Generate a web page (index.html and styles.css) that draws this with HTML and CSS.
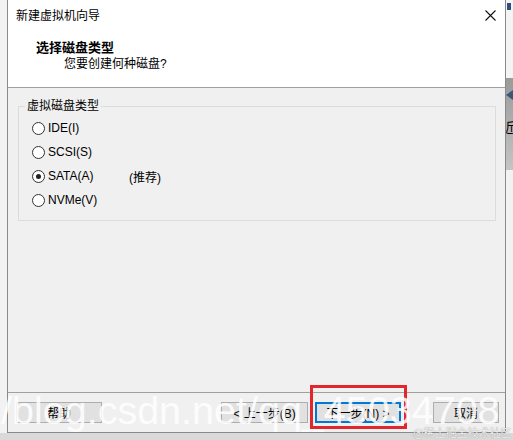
FILE: index.html
```html
<!DOCTYPE html>
<html lang="zh-CN">
<head>
<meta charset="utf-8">
<title>新建虚拟机向导</title>
<link rel="stylesheet" href="styles.css">
</head>
<body>
<div class="screen">
  <div class="side side-left"></div>
  <div class="dialog">
    <div class="titlebar">
      <span class="title">新建虚拟机向导</span>
      <span class="close" aria-label="关闭">
        <svg width="11" height="11" viewBox="0 0 11 11"><path d="M0.5 0.5 L10.5 10.5 M10.5 0.5 L0.5 10.5" stroke="#111" stroke-width="1.1" fill="none"/></svg>
      </span>
    </div>
    <div class="header">
      <div class="h-title">选择磁盘类型</div>
      <div class="h-sub">您要创建何种磁盘?</div>
    </div>
    <div class="body">
      <fieldset class="group">
        <legend>虚拟磁盘类型</legend>
        <div class="options">
          <div class="opt"><span class="radio"></span><span class="lbl">IDE(I)</span></div>
          <div class="opt"><span class="radio"></span><span class="lbl">SCSI(S)</span></div>
          <div class="opt"><span class="radio checked"><span class="dot"></span></span><span class="lbl">SATA(A)</span><span class="note">(推荐)</span></div>
          <div class="opt"><span class="radio"></span><span class="lbl">NVMe(V)</span></div>
        </div>
      </fieldset>
    </div>
    <div class="footer">
      <button class="btn btn-help">帮助</button>
      <span class="spacer"></span>
      <button class="btn btn-back">&lt; 上一步(B)</button>
      <button class="btn btn-next">下一步(N) &gt;</button>
      <button class="btn btn-cancel">取消</button>
    </div>
  </div>
  <div class="side side-right">
    <div class="r-top"><span class="r-icon"></span></div>
    <div class="r-band"><span class="r-arrow"></span><span class="r-char">近</span></div>
    <div class="r-rest"></div>
  </div>
</div>
<div class="annot"></div>
<div class="wm">/blog.csdn.net/qq_45034708</div>
<div class="wm2">@稀土掘金技术社区</div>
</body>
</html>
```

FILE: styles.css
```css
* { box-sizing: border-box; }
html, body {
  margin: 0;
  padding: 0;
}
body {
  width: 513px;
  height: 440px;
  overflow: hidden;
  position: relative;
  background: #d9d9d9;
  font-family: "Liberation Sans", "Noto Sans CJK SC", sans-serif;
  font-size: 12px;
  color: #000;
}
.screen {
  display: flex;
  height: 433px;
}
.side-left {
  width: 7px;
  background: #f2f2f2;
}
.dialog {
  width: 499px;
  height: 433px;
  border: 1px solid #8a8a8a;
  border-top: none;
  background: #f0f0f0;
  display: flex;
  flex-direction: column;
}
.titlebar {
  height: 30px;
  background: #fff;
  display: flex;
  align-items: center;
  padding-left: 8px;
  padding-right: 9px;
}
.title {
  flex: 1;
  font-size: 12px;
  line-height: 16px;
  padding-top: 1px;
}
.close {
  display: flex;
  width: 11px;
  height: 11px;
}
.header {
  height: 58px;
  background: #fff;
  border-bottom: 1px solid #a0a0a0;
  padding: 9px 0 0 28px;
}
.h-title {
  font-size: 13px;
  font-weight: bold;
  line-height: 17px;
}
.h-sub {
  font-size: 12px;
  line-height: 17px;
  padding-left: 28px;
}
.body {
  flex: 1;
  padding: 10px 9px 0 10px;
}
.group {
  margin: 0;
  padding: 2px 6px 8px 6px;
  border: 1px solid #dcdcdc;
  min-width: 0;
}
.group legend {
  padding: 0 2px;
  font-size: 12px;
  line-height: 16px;
}
.options {
  margin-left: 7px;
}
.opt {
  height: 24px;
  display: flex;
  align-items: center;
}
.radio {
  width: 13px;
  height: 13px;
  border: 1px solid #333;
  border-radius: 50%;
  background: #fff;
  display: flex;
  align-items: center;
  justify-content: center;
  margin-right: 3px;
}
.dot {
  width: 5px;
  height: 5px;
  border-radius: 50%;
  background: #222;
}
.lbl {
  width: 81px;
  font-size: 12px;
}
.note {
  font-size: 12px;
}
.footer {
  height: 40px;
  border-top: 1px solid #a0a0a0;
  display: flex;
  align-items: flex-start;
  padding: 9px 6px 0 8px;
}
.spacer { flex: 1; }
.btn {
  height: 21px;
  background: #e1e1e1;
  border: 1px solid #adadad;
  font-family: "Liberation Sans", "Noto Sans CJK SC", sans-serif;
  font-size: 12px;
  color: #000;
  padding: 0;
  margin: 0;
}
.btn-help { width: 86px; }
.btn-back { width: 87px; }
.btn-next {
  width: 86px;
  margin-left: 7px;
  border: 2px solid #0078d7;
}
.btn-cancel {
  width: 66px;
  margin-left: 32px;
}
.side-right {
  width: 7px;
  display: flex;
  flex-direction: column;
  overflow: hidden;
}
.r-top {
  height: 78px;
  background: #f4f4f4;
  position: relative;
}
.r-icon {
  position: absolute;
  left: 1px;
  top: 3px;
  width: 4px;
  height: 7px;
  background: #2d4f7a;
}
.r-band {
  height: 92px;
  background: linear-gradient(#9a9a9a, #c4c4c4);
  position: relative;
  overflow: hidden;
}
.r-arrow {
  position: absolute;
  left: 0;
  top: 12px;
  width: 7px;
  height: 10px;
  background: #3b5778;
  clip-path: polygon(100% 0, 0 50%, 100% 100%);
}
.r-char {
  position: absolute;
  left: -4px;
  top: 42px;
  font-size: 13px;
  line-height: 14px;
  font-family: "Noto Sans CJK SC", sans-serif;
}
.r-rest {
  flex: 1;
  background: #f2f2f2;
}
.annot {
  position: absolute;
  left: 310px;
  top: 385px;
  width: 97px;
  height: 44px;
  border: 3px solid #e0282c;
}
.wm {
  position: absolute;
  left: 1px;
  top: 390px;
  font-family: "Liberation Sans", sans-serif;
  font-size: 39.5px;
  line-height: 40px;
  color: rgba(255, 255, 255, 0.85);
  white-space: nowrap;
}
.wm2 {
  position: absolute;
  left: 413px;
  top: 426px;
  font-family: "Noto Sans CJK SC", sans-serif;
  font-size: 11px;
  line-height: 13px;
  color: rgba(255, 255, 255, 0.9);
  text-shadow: 0 0 1px #777;
  white-space: nowrap;
}
```
